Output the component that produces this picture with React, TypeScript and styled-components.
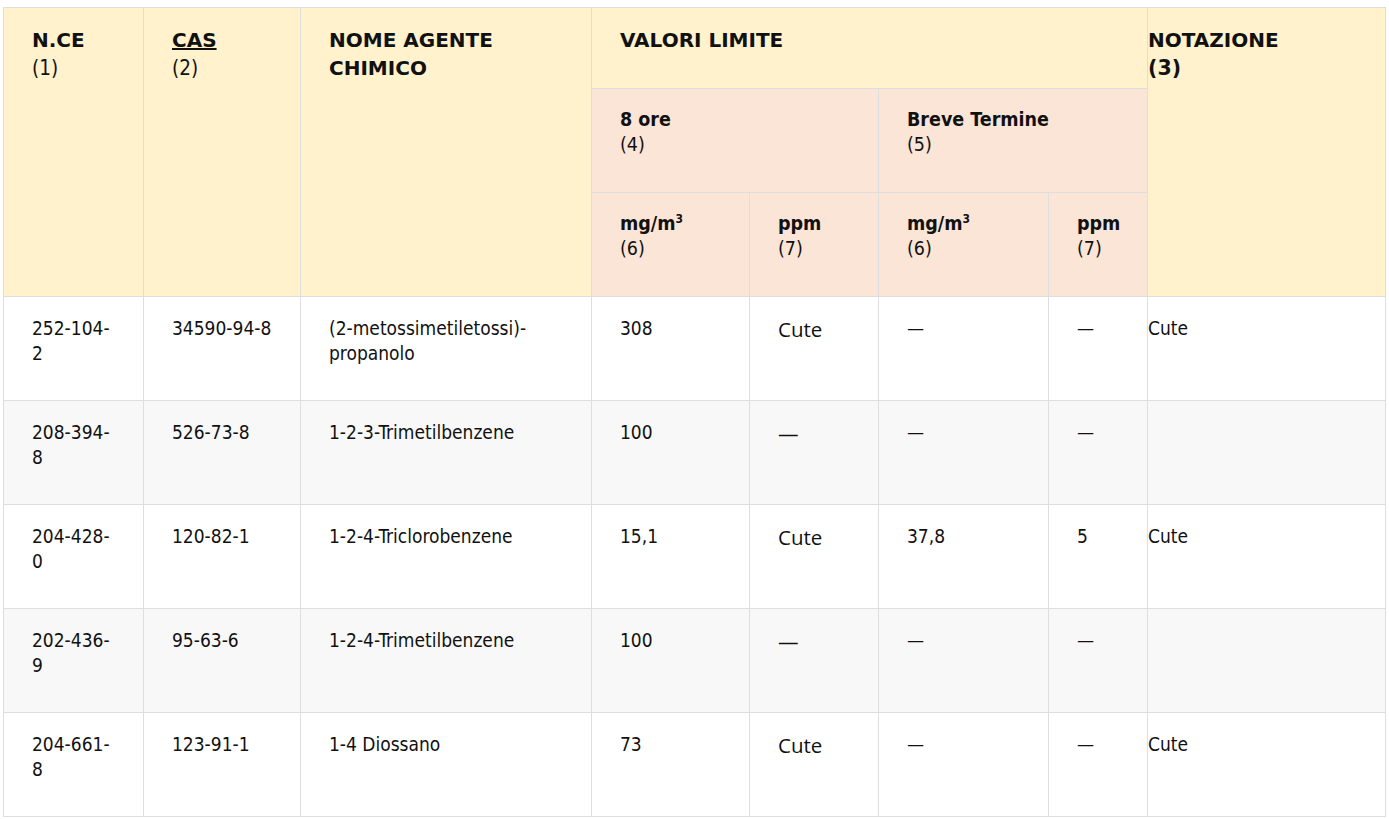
import React from 'react';
import styled, { createGlobalStyle } from 'styled-components';

const GlobalStyle = createGlobalStyle`
  html, body {
    margin: 0;
    padding: 0;
    background: #ffffff;
  }
  body {
    font-family: "DejaVu Sans Condensed", "Liberation Sans", sans-serif;
    color: #111;
  }
`;

const Page = styled.div`
  padding: 7px 4px 0 3px;
`;

const Table = styled.table`
  width: 1382px;
  border-collapse: collapse;
  table-layout: fixed;
  font-size: 19px;
  line-height: 25px;
`;

const HeadCell = styled.th<{ $tone: 'yellow' | 'pink'; $flush?: boolean }>`
  background: ${(p) => (p.$tone === 'yellow' ? '#fff2cc' : '#fbe5d6')};
  border: 1px solid #dedede;
  text-align: left;
  vertical-align: top;
  font-weight: normal;
  padding: 18px ${(p) => (p.$flush ? '0' : '28px')};
`;

const MainTitle = styled.div<{ $under?: boolean }>`
  font-family: "DejaVu Sans", "Liberation Sans", sans-serif;
  font-weight: bold;
  font-size: 20px;
  line-height: 28px;
  text-decoration: ${(p) => (p.$under ? 'underline' : 'none')};
`;

const SubTitle = styled.div`
  font-weight: bold;
  font-size: 19.5px;
`;

const Ref = styled.div<{ $bold?: boolean; $big?: boolean }>`
  font-weight: ${(p) => (p.$bold ? 'bold' : 'normal')};
  font-family: ${(p) => (p.$bold ? '"DejaVu Sans", "Liberation Sans", sans-serif' : 'inherit')};
  font-size: ${(p) => (p.$big ? '20.5px' : '19.5px')};
  line-height: ${(p) => (p.$big ? '28px' : '25px')};
`;

const Sup = styled.sup`
  font-size: 12px;
  vertical-align: 7px;
  line-height: 0;
`;

const Row = styled.tr<{ $alt: boolean }>`
  height: 104px;
  background: ${(p) => (p.$alt ? '#f8f8f8' : '#ffffff')};
`;

const Cell = styled.td<{ $flush?: boolean }>`
  border: 1px solid #dedede;
  vertical-align: top;
  padding: 19px ${(p) => (p.$flush ? '0' : '28px')};
  overflow-wrap: break-word;
`;

const Soft = styled.span`
  display: inline-block;
  font-family: "Open Sans", "Noto Sans", sans-serif;
  font-size: 20.5px;
  margin-top: 1px;
`;

type Item = {
  ce: string;
  cas: string;
  name: string;
  mg8: string;
  ppm8: string;
  mgShort: string;
  ppmShort: string;
  note: string;
};

const DASH = '\u2014';

const items: Item[] = [
  { ce: '252-104-2', cas: '34590-94-8', name: '(2-metossimetiletossi)-propanolo', mg8: '308', ppm8: 'Cute', mgShort: DASH, ppmShort: DASH, note: 'Cute' },
  { ce: '208-394-8', cas: '526-73-8', name: '1-2-3-Trimetilbenzene', mg8: '100', ppm8: DASH, mgShort: DASH, ppmShort: DASH, note: '' },
  { ce: '204-428-0', cas: '120-82-1', name: '1-2-4-Triclorobenzene', mg8: '15,1', ppm8: 'Cute', mgShort: '37,8', ppmShort: '5', note: 'Cute' },
  { ce: '202-436-9', cas: '95-63-6', name: '1-2-4-Trimetilbenzene', mg8: '100', ppm8: DASH, mgShort: DASH, ppmShort: DASH, note: '' },
  { ce: '204-661-8', cas: '123-91-1', name: '1-4 Diossano', mg8: '73', ppm8: 'Cute', mgShort: DASH, ppmShort: DASH, note: 'Cute' },
];

const widths = [140, 157, 291, 158, 129, 170, 99, 238];

export default function App() {
  return (
    <Page>
      <GlobalStyle />
      <Table>
        <colgroup>
          {widths.map((w, i) => (
            <col key={i} style={{ width: w }} />
          ))}
        </colgroup>
        <thead>
          <tr style={{ height: 81 }}>
            <HeadCell $tone="yellow" rowSpan={3}>
              <MainTitle>N.CE</MainTitle>
              <Ref $big>(1)</Ref>
            </HeadCell>
            <HeadCell $tone="yellow" rowSpan={3}>
              <MainTitle $under>CAS</MainTitle>
              <Ref $big>(2)</Ref>
            </HeadCell>
            <HeadCell $tone="yellow" rowSpan={3}>
              <MainTitle>
                NOME AGENTE
                <br />
                CHIMICO
              </MainTitle>
            </HeadCell>
            <HeadCell $tone="yellow" colSpan={4}>
              <MainTitle>VALORI LIMITE</MainTitle>
            </HeadCell>
            <HeadCell $tone="yellow" rowSpan={3} $flush>
              <MainTitle>NOTAZIONE</MainTitle>
              <Ref $bold $big>(3)</Ref>
            </HeadCell>
          </tr>
          <tr style={{ height: 104 }}>
            <HeadCell $tone="pink" colSpan={2}>
              <SubTitle>8 ore</SubTitle>
              <Ref>(4)</Ref>
            </HeadCell>
            <HeadCell $tone="pink" colSpan={2}>
              <SubTitle>Breve Termine</SubTitle>
              <Ref>(5)</Ref>
            </HeadCell>
          </tr>
          <tr style={{ height: 104 }}>
            <HeadCell $tone="pink">
              <SubTitle>
                mg/m<Sup>3</Sup>
              </SubTitle>
              <Ref>(6)</Ref>
            </HeadCell>
            <HeadCell $tone="pink">
              <SubTitle>ppm</SubTitle>
              <Ref>(7)</Ref>
            </HeadCell>
            <HeadCell $tone="pink">
              <SubTitle>
                mg/m<Sup>3</Sup>
              </SubTitle>
              <Ref>(6)</Ref>
            </HeadCell>
            <HeadCell $tone="pink">
              <SubTitle>ppm</SubTitle>
              <Ref>(7)</Ref>
            </HeadCell>
          </tr>
        </thead>
        <tbody>
          {items.map((it, i) => (
            <Row key={it.cas} $alt={i % 2 === 1}>
              <Cell>{it.ce}</Cell>
              <Cell>{it.cas}</Cell>
              <Cell>{it.name}</Cell>
              <Cell>{it.mg8}</Cell>
              <Cell>
                <Soft>{it.ppm8}</Soft>
              </Cell>
              <Cell>{it.mgShort}</Cell>
              <Cell>{it.ppmShort}</Cell>
              <Cell $flush>{it.note}</Cell>
            </Row>
          ))}
        </tbody>
      </Table>
    </Page>
  );
}
